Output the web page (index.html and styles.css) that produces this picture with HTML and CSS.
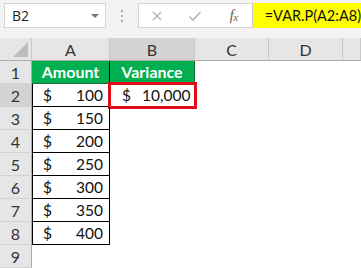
FILE: index.html
```html
<!DOCTYPE html>
<html lang="en">
<head>
  <meta charset="UTF-8">
  <title>VAR.P</title>
  <link rel="stylesheet" href="styles.css">
</head>
<body>
  <div class="barra">
    <div class="nome">
      <span>B2</span>
      <span class="seta"></span>
    </div>
    <div class="pontos"><i></i><i></i><i></i></div>
    <div class="formula">
      <div class="icones">
        <svg width="12" height="12" viewBox="0 0 12 12"><path d="M2 2 L10 10 M10 2 L2 10" stroke="#b5b5b5" stroke-width="1.4" fill="none"/></svg>
        <svg width="14" height="12" viewBox="0 0 14 12"><path d="M1.5 6.5 L5 10 L12.5 2" stroke="#b5b5b5" stroke-width="1.6" fill="none"/></svg>
        <span class="fx">f<sub>x</sub></span>
      </div>
      <div class="texto">=VAR.P(A2:A8)</div>
    </div>
  </div>

  <div class="planilha">
    <div class="cab canto"></div>
    <div class="cab">A</div>
    <div class="cab sel">B</div>
    <div class="cab">C</div>
    <div class="cab">D</div>
    <div class="cab"></div>

    <div class="lin">1</div>
    <div class="cel verde col-a">Amount</div>
    <div class="cel verde">Variance</div>
    <div class="cel"></div><div class="cel"></div><div class="cel"></div>

    <div class="lin sel">2</div>
    <div class="cel valor col-a"><span>$</span><span>100</span></div>
    <div class="cel valor ativa"><span>$</span><span>10,000</span></div>
    <div class="cel"></div><div class="cel"></div><div class="cel"></div>

    <div class="lin">3</div>
    <div class="cel valor col-a"><span>$</span><span>150</span></div>
    <div class="cel"></div><div class="cel"></div><div class="cel"></div><div class="cel"></div>

    <div class="lin">4</div>
    <div class="cel valor col-a"><span>$</span><span>200</span></div>
    <div class="cel"></div><div class="cel"></div><div class="cel"></div><div class="cel"></div>

    <div class="lin">5</div>
    <div class="cel valor col-a"><span>$</span><span>250</span></div>
    <div class="cel"></div><div class="cel"></div><div class="cel"></div><div class="cel"></div>

    <div class="lin">6</div>
    <div class="cel valor col-a"><span>$</span><span>300</span></div>
    <div class="cel"></div><div class="cel"></div><div class="cel"></div><div class="cel"></div>

    <div class="lin">7</div>
    <div class="cel valor col-a"><span>$</span><span>350</span></div>
    <div class="cel"></div><div class="cel"></div><div class="cel"></div><div class="cel"></div>

    <div class="lin">8</div>
    <div class="cel valor col-a"><span>$</span><span>400</span></div>
    <div class="cel"></div><div class="cel"></div><div class="cel"></div><div class="cel"></div>

    <div class="lin">9</div>
    <div class="cel"></div><div class="cel"></div><div class="cel"></div><div class="cel"></div><div class="cel"></div>
  </div>
</body>
</html>
```

FILE: styles.css
```css
body {
  margin: 0;
  width: 361px;
  height: 268px;
  overflow: hidden;
  background-color: #fff;
  font-family: Lato, "Open Sans", sans-serif;
  color: #111;
}

.barra {
  height: 38px;
  background-color: #f3f3f3;
  display: flex;
  align-items: flex-start;
  padding-top: 3px;
  box-sizing: border-box;
}

.nome {
  margin-left: 4px;
  width: 102px;
  height: 25px;
  box-sizing: border-box;
  background-color: #fff;
  border: 1px solid #d4d4d4;
  display: flex;
  align-items: center;
  justify-content: space-between;
  padding: 0 6px 0 7px;
  font-family: "Open Sans", sans-serif;
  font-size: 14px;
  color: #222;
}

.seta {
  width: 0;
  height: 0;
  border-left: 4px solid transparent;
  border-right: 4px solid transparent;
  border-top: 4px solid #777;
}

.pontos {
  width: 32px;
  height: 25px;
  display: flex;
  flex-direction: column;
  align-items: center;
  justify-content: center;
  gap: 3px;
}

.pontos i {
  width: 2px;
  height: 2px;
  background-color: #aaa;
}

.formula {
  flex: 1;
  height: 25px;
  display: flex;
}

.icones {
  width: 114px;
  box-sizing: border-box;
  background-color: #fff;
  border: 1px solid #d4d4d4;
  border-right: none;
  display: flex;
  align-items: center;
  padding-left: 12px;
}

.icones svg:first-child {
  margin-right: 25px;
}

.icones svg:nth-child(2) {
  margin-right: 28px;
}

.fx {
  font-family: "Liberation Serif", serif;
  font-style: italic;
  font-size: 14px;
  color: #555;
}

.fx sub {
  font-size: 10px;
  vertical-align: -1px;
}

.texto {
  flex: 1;
  background-color: #ffff00;
  border-left: 1px solid #c9c9c9;
  font-size: 14.5px;
  line-height: 25px;
  padding-left: 12px;
}

.planilha {
  display: grid;
  grid-template-columns: 32px 78px 85px 74px 74px 18px;
  grid-template-rows: repeat(10, 23px);
}

.cab {
  background-color: #e6e6e6;
  border-right: 1px solid #c8c8c8;
  border-bottom: 1px solid #ababab;
  box-sizing: border-box;
  text-align: center;
  font-size: 16px;
  line-height: 23px;
  color: #333;
}

.cab.sel {
  background-color: #d3d3d3;
}

.canto {
  position: relative;
}

.canto::after {
  content: "";
  position: absolute;
  right: 3px;
  bottom: 3px;
  width: 0;
  height: 0;
  border-left: 15px solid transparent;
  border-bottom: 15px solid #bdbdbd;
}

.lin {
  background-color: #e6e6e6;
  border-right: 1px solid #ababab;
  border-bottom: 1px solid #d2d2d2;
  box-sizing: border-box;
  text-align: center;
  font-size: 16px;
  line-height: 23px;
  color: #333;
}

.lin.sel {
  background-color: #d3d3d3;
}

.cel {
  box-sizing: border-box;
  font-size: 15.5px;
  line-height: 22px;
}

.verde {
  background-color: #00b050;
  color: #fff;
  font-weight: bold;
  font-size: 16px;
  text-align: center;
  border-right: 1px solid #1e6b3a;
  border-bottom: 1px solid #1e6b3a;
}

.col-a {
  border-right: 1px solid #000;
}

.valor {
  display: flex;
  justify-content: space-between;
  padding: 0 6px 0 10px;
  border-bottom: 1px solid #000;
}

.valor.col-a {
  border-left: 1px solid #000;
}

.ativa {
  border-bottom: none;
  justify-content: flex-start;
  gap: 11px;
  padding-left: 12px;
  outline: 3px solid #e0101a;
  outline-offset: -1px;
}
```
